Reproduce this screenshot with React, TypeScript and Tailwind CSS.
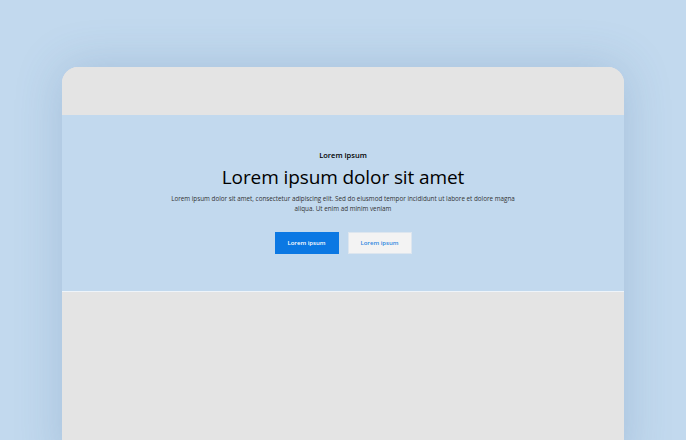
import React from 'react';

const font = { fontFamily: '"Open Sans", "Liberation Sans", sans-serif' };

export default function App() {
  return (
    <div className="w-[686px] h-[440px] overflow-hidden bg-[#c2d9ee] pt-[67px] px-[62px]" style={font}>
      <div className="h-[400px] rounded-t-[16px] overflow-hidden bg-[#e4e4e4] shadow-[0_0_48px_rgba(60,100,150,0.22)] flex flex-col">
        {/* browser top bar */}
        <div className="h-[48px] bg-[#e4e4e4]" />

        {/* hero */}
        <div className="h-[177px] bg-[#c2d9ee] border-b border-[#eef4fa] flex flex-col items-center pt-[35px]">
          <div className="text-[7.5px] font-semibold text-black leading-[10px]">Lorem ipsum</div>
          <h1 className="mt-[6px] text-[19px] font-medium text-black leading-[22px] tracking-[-0.1px]">
            Lorem ipsum dolor sit amet
          </h1>
          <p className="mt-[6px] w-[354px] text-center text-[6.3px] leading-[10px] text-[#333]">
            Lorem ipsum dolor sit amet, consectetur adipiscing elit. Sed do eiusmod tempor incididunt ut labore et dolore magna aliqua. Ut enim ad minim veniam
          </p>
          <div className="mt-[18px] flex gap-[9px]">
            <button className="w-[64px] h-[22px] bg-[#0b78e3] text-white text-[6px] font-semibold">
              Lorem ipsum
            </button>
            <button className="w-[64px] h-[22px] bg-[#f3f3f3] border border-[#dde6ef] text-[#2f87e0] text-[6px] font-semibold">
              Lorem ipsum
            </button>
          </div>
        </div>

        <div className="flex-1 bg-[#e4e4e4]" />
      </div>
    </div>
  );
}
